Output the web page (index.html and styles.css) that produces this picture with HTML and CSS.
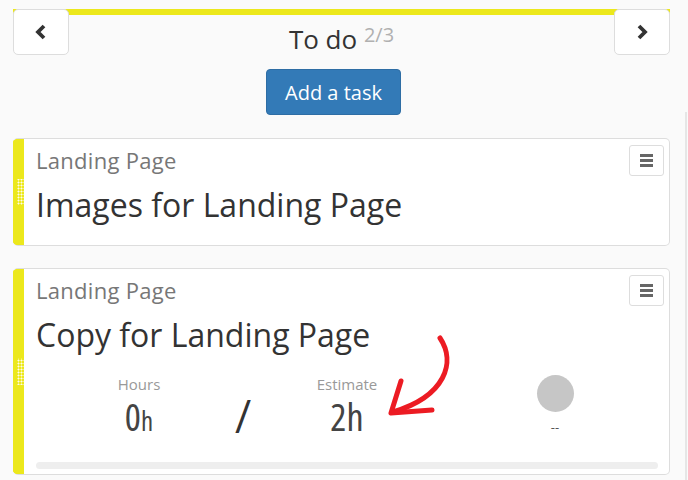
FILE: index.html
```html
<!DOCTYPE html>
<html lang="en">
<head>
    <meta charset="UTF-8">
    <meta name="viewport" content="width=device-width, initial-scale=1.0">
    <title>To do</title>
    <link rel="stylesheet" href="styles.css">
</head>
<body>
    <div class="board">
        <div class="column">
            <div class="column-head">
                <button class="nav-btn">
                    <svg width="14" height="16" viewBox="0 0 14 16"><polyline points="10,2 4,8 10,14" fill="none" stroke="#333" stroke-width="3.8"/></svg>
                </button>
                <div class="column-title">To do <sup>2/3</sup></div>
                <button class="nav-btn">
                    <svg width="14" height="16" viewBox="0 0 14 16"><polyline points="4,2 10,8 4,14" fill="none" stroke="#333" stroke-width="3.8"/></svg>
                </button>
            </div>
            <div class="add-row">
                <button class="add-btn">Add a task</button>
            </div>

            <div class="card card-first">
                <div class="card-handle"></div>
                <div class="card-body">
                    <div class="card-top">
                        <div class="card-project">Landing Page</div>
                        <button class="menu-btn"><span></span><span></span><span></span></button>
                    </div>
                    <div class="card-title">Images for Landing Page</div>
                </div>
            </div>

            <div class="card">
                <div class="card-handle"></div>
                <div class="card-body">
                    <div class="card-top">
                        <div class="card-project">Landing Page</div>
                        <button class="menu-btn"><span></span><span></span><span></span></button>
                    </div>
                    <div class="card-title">Copy for Landing Page</div>
                    <div class="stats">
                        <div class="stat">
                            <div class="stat-label">Hours</div>
                            <div class="stat-value">0<small>h</small></div>
                        </div>
                        <div class="stat slash">/</div>
                        <div class="stat">
                            <div class="stat-label">Estimate</div>
                            <div class="stat-value">2h</div>
                        </div>
                        <div class="stat"></div>
                        <div class="stat">
                            <div class="avatar"></div>
                            <div class="avatar-name">--</div>
                        </div>
                    </div>
                    <div class="progress"></div>
                </div>
            </div>
        </div>
        <div class="scroll-edge"></div>
    </div>

    <svg class="arrow" width="688" height="480" viewBox="0 0 688 480">
        <path d="M440 338 C456 362, 446 396, 393 412" fill="none" stroke="#ec1b23" stroke-width="5" stroke-linecap="round"/>
        <path d="M401 381 L391 413 L432 410" fill="none" stroke="#ec1b23" stroke-width="5" stroke-linecap="round" stroke-linejoin="round"/>
    </svg>
</body>
</html>
```

FILE: styles.css
```css
body {
    margin: 0;
    background-color: #fafafa;
    font-family: "Open Sans", Arial, sans-serif;
    color: #333;
}
.board {
    display: flex;
    height: 480px;
    overflow: hidden;
}
.column {
    width: 657px;
    margin: 9px 0 0 13px;
}
.scroll-edge {
    width: 2px;
    margin: 112px 0 0 15px;
    background-color: #e6e6e6;
}
.column-head {
    display: flex;
    justify-content: space-between;
    align-items: flex-start;
    height: 46px;
    background: linear-gradient(#ece81c, #ece81c) top / 100% 6px no-repeat;
}
.nav-btn {
    width: 56px;
    height: 46px;
    display: flex;
    align-items: center;
    justify-content: center;
    background-color: #fff;
    border: 1px solid #ddd;
    border-radius: 5px;
    padding: 0;
}
.column-title {
    font-size: 26px;
    line-height: 32px;
    padding-top: 14px;
}
.column-title sup {
    font-size: 20px;
    line-height: 0;
    color: #b0b0b0;
    vertical-align: 7px;
}
.add-row {
    display: flex;
    justify-content: center;
    margin-top: 14px;
    padding-right: 16px;
}
.add-btn {
    height: 46px;
    padding: 0 18px;
    background-color: #337ab7;
    border: 1px solid #2e6da4;
    border-radius: 4px;
    color: #fff;
    font-family: "Open Sans", Arial, sans-serif;
    font-size: 20px;
}
.card {
    display: flex;
    margin-top: 22px;
    background-color: #fff;
    border: 1px solid #ddd;
    border-left: none;
    border-radius: 5px;
    overflow: hidden;
}
.card-first {
    margin-top: 23px;
}
.card-handle {
    width: 11px;
    flex-shrink: 0;
    background-color: #ece81c;
    background-image:
        linear-gradient(#ece81c, #ece81c),
        linear-gradient(#ece81c, #ece81c),
        linear-gradient(#ece81c, #ece81c),
        radial-gradient(rgba(255, 255, 255, 0.9) 0.9px, transparent 1.1px);
    background-size: 100% calc(50% - 13px), 100% calc(50% - 13px), 4px 100%, 3px 3px;
    background-position: top, bottom, left, 4px 0;
    background-repeat: no-repeat, no-repeat, no-repeat, repeat;
}
.card-body {
    flex: 1;
    padding: 6px 5px 5px 12px;
}
.card-top {
    display: flex;
    justify-content: space-between;
    align-items: flex-start;
}
.card-project {
    font-size: 22px;
    letter-spacing: 0.3px;
    line-height: 26px;
    color: #777;
    margin-top: 2px;
}
.menu-btn {
    width: 35px;
    height: 31px;
    display: flex;
    flex-direction: column;
    align-items: center;
    justify-content: center;
    gap: 2px;
    background-color: #fff;
    border: 1px solid #ddd;
    border-radius: 3px;
    padding: 0;
}
.menu-btn span {
    width: 13px;
    height: 3px;
    background-color: #666;
}
.card-title {
    font-size: 32px;
    line-height: 40px;
    margin-top: 9px;
    padding-bottom: 15px;
}
.stats {
    display: grid;
    grid-template-columns: repeat(5, 104px);
    margin: 5px 0 0 51px;
    text-align: center;
}
.stat-label {
    font-size: 15px;
    color: #999;
    line-height: 18px;
}
.stat-value {
    font-size: 38px;
    font-stretch: 78%;
    line-height: 40px;
    margin-top: 3px;
    color: #444;
}
.stat-value small {
    font-size: 27px;
}
.slash {
    font-size: 46px;
    font-stretch: 75%;
    line-height: 40px;
    padding-top: 20px;
    color: #333;
}
.avatar {
    width: 37px;
    height: 37px;
    margin: 0 auto;
    border-radius: 50%;
    background-color: #c6c6c6;
}
.avatar-name {
    font-size: 13px;
    line-height: 14px;
    color: #555;
    margin-top: 8px;
}
.progress {
    height: 7px;
    margin: 21px 6px 0 0;
    background-color: #eee;
    border-radius: 4px;
}
.arrow {
    position: absolute;
    top: 0;
    left: 0;
    pointer-events: none;
}
```
